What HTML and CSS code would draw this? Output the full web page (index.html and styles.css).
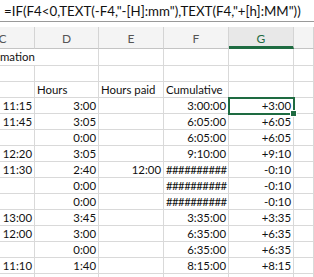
FILE: index.html
```html
<!DOCTYPE html>
<html>
<head>
<meta charset="utf-8">
<link rel="stylesheet" href="styles.css">
</head>
<body>
<div class="formula-bar">=IF(F4&lt;0,TEXT(-F4,"-[H]:mm"),TEXT(F4,"+[h]:MM"))</div>
<div class="gap"></div>
<div class="sheet">
  <div class="hd">C</div><div class="hd">D</div><div class="hd">E</div><div class="hd">F</div><div class="hd sel">G</div><div class="hd"></div>

  <div class="c l span-title">mation</div><div class="c"></div><div class="c"></div><div class="c"></div><div class="c"></div>

  <div class="c"></div><div class="c"></div><div class="c"></div><div class="c"></div><div class="c"></div><div class="c"></div>

  <div class="c"></div><div class="c l">Hours</div><div class="c l">Hours paid</div><div class="c l">Cumulative</div><div class="c"></div><div class="c"></div>

  <div class="c">11:15</div><div class="c">3:00</div><div class="c"></div><div class="c">3:00:00</div><div class="c active">+3:00<span class="handle"></span></div><div class="c"></div>
  <div class="c">11:45</div><div class="c">3:05</div><div class="c"></div><div class="c">6:05:00</div><div class="c">+6:05</div><div class="c"></div>
  <div class="c"></div><div class="c">0:00</div><div class="c"></div><div class="c">6:05:00</div><div class="c">+6:05</div><div class="c"></div>
  <div class="c">12:20</div><div class="c">3:05</div><div class="c"></div><div class="c">9:10:00</div><div class="c">+9:10</div><div class="c"></div>
  <div class="c">11:30</div><div class="c">2:40</div><div class="c">12:00</div><div class="c hash">##########</div><div class="c">-0:10</div><div class="c"></div>
  <div class="c"></div><div class="c">0:00</div><div class="c"></div><div class="c hash">##########</div><div class="c">-0:10</div><div class="c"></div>
  <div class="c"></div><div class="c">0:00</div><div class="c"></div><div class="c hash">##########</div><div class="c">-0:10</div><div class="c"></div>
  <div class="c">13:00</div><div class="c">3:45</div><div class="c"></div><div class="c">3:35:00</div><div class="c">+3:35</div><div class="c"></div>
  <div class="c">12:00</div><div class="c">3:00</div><div class="c"></div><div class="c">6:35:00</div><div class="c">+6:35</div><div class="c"></div>
  <div class="c"></div><div class="c">0:00</div><div class="c"></div><div class="c">6:35:00</div><div class="c">+6:35</div><div class="c"></div>
  <div class="c">11:10</div><div class="c">1:40</div><div class="c"></div><div class="c">8:15:00</div><div class="c">+8:15</div><div class="c"></div>
  <div class="c"></div><div class="c"></div><div class="c"></div><div class="c"></div><div class="c"></div><div class="c"></div>
</div>
</body>
</html>
```
FILE: styles.css
```css
html, body {
  margin: 0;
  padding: 0;
  background: #ffffff;
  overflow: hidden;
  width: 314px;
  height: 277px;
}

body {
  font-family: Lato, "Open Sans", sans-serif;
  color: #111;
}

.formula-bar {
  height: 22px;
  box-sizing: border-box;
  border-bottom: 1px solid #9a9a9a;
  padding-left: 4px;
  font-size: 13.3px;
  line-height: 22px;
  white-space: nowrap;
  overflow: hidden;
}

.gap {
  height: 5px;
}

.sheet {
  display: grid;
  grid-template-columns: 64px 64px 65px 65px 65px 20px;
  grid-template-rows: 22px 17px repeat(14, 16px);
  margin-left: -29px;
  font-size: 11.4px;
}

.hd {
  background: #f4f4f4;
  color: #555;
  text-align: center;
  line-height: 22px;
  border-right: 1px solid #d4d4d4;
  border-bottom: 1px solid #c4c4c4;
  box-sizing: border-box;
  padding-top: 1px;
  font-size: 12px;
}

.hd.sel {
  background: #e8e8e8;
  color: #1e6b41;
  border-bottom: 3px solid #1e6b41;
}

.c {
  box-sizing: border-box;
  border-right: 1px solid #d9d9d9;
  border-bottom: 1px solid #d9d9d9;
  text-align: right;
  padding: 0 2px 0 2px;
  line-height: 15px;
  white-space: nowrap;
  position: relative;
}

.c.l {
  text-align: left;
}

.span-title {
  grid-column: span 2;
  padding-left: 29px;
}

.hash {
  text-align: left;
  letter-spacing: -0.55px;
  overflow: hidden;
}

.active {
  outline: 2px solid #1e6b41;
  outline-offset: -1px;
  z-index: 2;
}

.handle {
  position: absolute;
  right: -4px;
  bottom: -4px;
  width: 5px;
  height: 5px;
  background: #1e6b41;
  border: 1px solid #fff;
}
```
